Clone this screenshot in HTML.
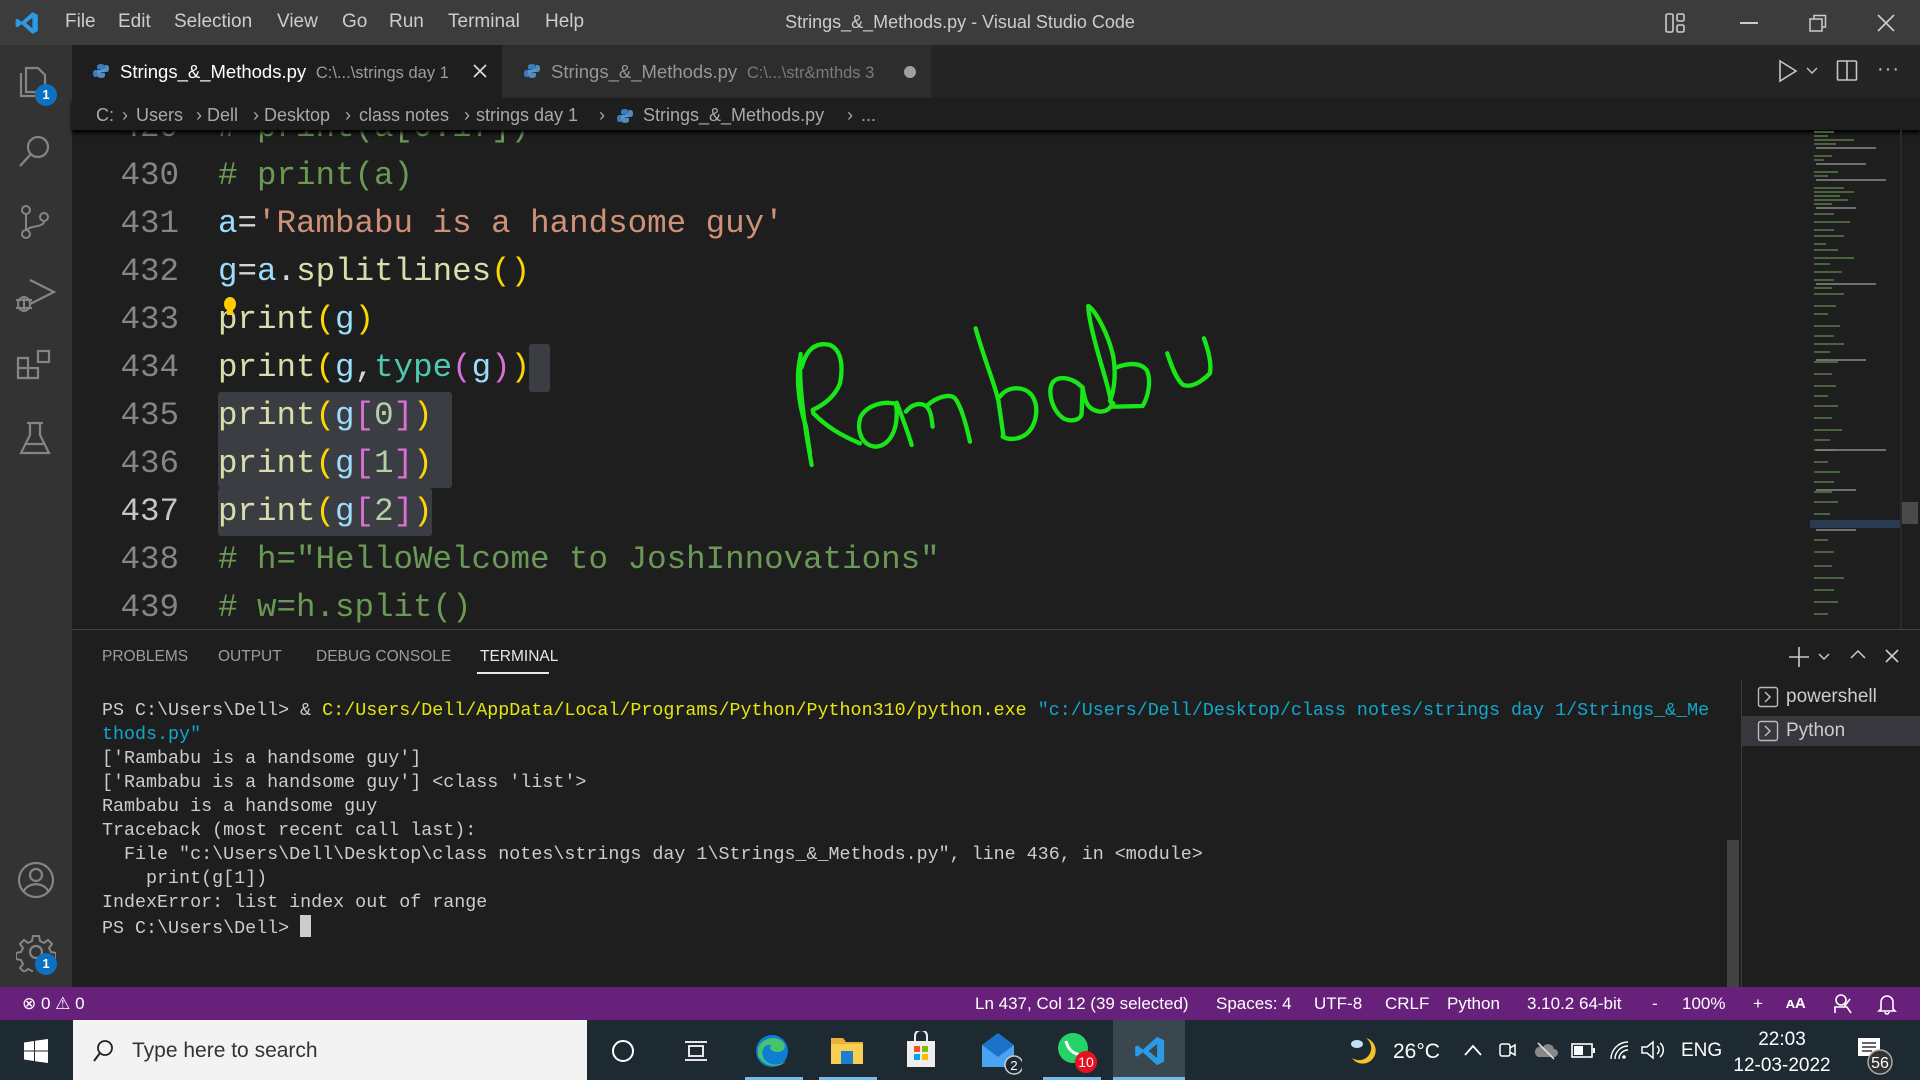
<!DOCTYPE html>
<html><head><meta charset="utf-8"><style>
*{margin:0;padding:0;box-sizing:border-box}
body{width:1920px;height:1080px;overflow:hidden;background:#1e1e1e;font-family:"Liberation Sans",sans-serif;position:relative;color:#ccc}
.a{position:absolute}
.mono{font-family:"Liberation Mono",monospace}
.ln{position:absolute;left:72px;width:107px;text-align:right;color:#858585}
.cd{position:absolute;left:218px;white-space:pre}
.cm{color:#6a9955}.st{color:#ce9178}.v{color:#9cdcfe}.f{color:#dcdcaa}.p1{color:#ffd700}.p2{color:#da70d6}.p3{color:#179fff}.ty{color:#4ec9b0}.n{color:#b5cea8}.o{color:#d4d4d4}
.t{position:absolute;left:102px;white-space:pre;font-size:18.35px;color:#ccc;height:24px;line-height:24px}
.sb{position:absolute;top:987px;height:33px;line-height:33px;font-size:17px;color:#fff;white-space:nowrap}
.mn{position:absolute;top:11px;font-size:19px;color:#ccc}
.bc{position:absolute;top:105px;font-size:18px;color:#a9a9a9;white-space:nowrap}
</style></head><body>
<!-- title bar -->
<div class="a" style="left:0;top:0;width:1920px;height:45px;background:#3c3c3c"></div>
<svg class="a" style="left:14px;top:10px" width="26" height="26" viewBox="0 0 24 24"><path d="M17 2 L22 4.5 V19.5 L17 22 L7 13 L3 16 L1.5 15 V9 L3 8 L7 11 L17 2 Z M17 7 L11 12 L17 17 Z" fill="#2b9be8"/></svg>
<div class="mn" style="left:65px">File</div>
<div class="mn" style="left:118px">Edit</div>
<div class="mn" style="left:174px">Selection</div>
<div class="mn" style="left:277px">View</div>
<div class="mn" style="left:342px">Go</div>
<div class="mn" style="left:389px">Run</div>
<div class="mn" style="left:448px">Terminal</div>
<div class="mn" style="left:545px">Help</div>
<div class="a" style="top:12px;left:0;width:1920px;text-align:center;font-size:18px;color:#ccc">Strings_&amp;_Methods.py - Visual Studio Code</div>
<svg class="a" style="left:1664px;top:12px" width="24" height="22"><rect x="2" y="2" width="7" height="18" rx="1.5" fill="none" stroke="#ccc" stroke-width="1.6"/><rect x="13" y="2" width="7" height="7" rx="1.5" fill="none" stroke="#ccc" stroke-width="1.6"/><rect x="13" y="13" width="7" height="7" rx="1.5" fill="none" stroke="#ccc" stroke-width="1.6"/></svg>
<div class="a" style="left:1740px;top:22px;width:18px;height:1.5px;background:#ccc"></div>
<svg class="a" style="left:1808px;top:13px" width="20" height="20"><rect x="2" y="6" width="12" height="12" fill="none" stroke="#ccc" stroke-width="1.5"/><path d="M6 6V2.5H17.5V14H14" fill="none" stroke="#ccc" stroke-width="1.5"/></svg>
<svg class="a" style="left:1876px;top:13px" width="20" height="20"><path d="M2 2L18 18M18 2L2 18" stroke="#ccc" stroke-width="1.6"/></svg>

<!-- activity bar -->
<div class="a" style="left:0;top:45px;width:72px;height:942px;background:#333"></div>
<svg class="a" style="left:14px;top:60px" width="40" height="40" viewBox="0 0 40 40"><path d="M12 8h12l7 7v17H12z M7 13v23h17" fill="none" stroke="#858585" stroke-width="2.2"/></svg>
<div class="a" style="left:35px;top:84px;width:22px;height:22px;border-radius:11px;background:#0e70c0;color:#fff;font-size:13px;font-weight:bold;text-align:center;line-height:22px">1</div>
<svg class="a" style="left:16px;top:132px" width="40" height="40"><circle cx="22" cy="15" r="10" fill="none" stroke="#858585" stroke-width="2.2"/><path d="M15 22L4 34" stroke="#858585" stroke-width="2.4"/></svg>
<svg class="a" style="left:16px;top:203px" width="40" height="40"><circle cx="10" cy="7" r="4" fill="none" stroke="#858585" stroke-width="2"/><circle cx="10" cy="31" r="4" fill="none" stroke="#858585" stroke-width="2"/><circle cx="28" cy="14" r="4" fill="none" stroke="#858585" stroke-width="2"/><path d="M10 11V27M28 18C28 25 14 22 11 27" fill="none" stroke="#858585" stroke-width="2"/></svg>
<svg class="a" style="left:14px;top:274px" width="42" height="42"><path d="M16 6L40 18L16 30" fill="none" stroke="#858585" stroke-width="2.2"/><ellipse cx="10" cy="30" rx="6" ry="7" fill="none" stroke="#858585" stroke-width="2"/><path d="M2 26h16M2 34h16M10 23v14" stroke="#858585" stroke-width="2"/></svg>
<svg class="a" style="left:16px;top:348px" width="42" height="40"><path d="M2 10h10v10h10v10H2z M2 20h10v10M12 20v10" fill="none" stroke="#858585" stroke-width="2.2"/><rect x="22" y="3" width="11" height="11" fill="none" stroke="#858585" stroke-width="2.2"/></svg>
<svg class="a" style="left:18px;top:420px" width="36" height="36"><path d="M9 3h16M12 3v12L3 33h28L22 15V3M7 24h20" fill="none" stroke="#858585" stroke-width="2.2"/></svg>
<svg class="a" style="left:16px;top:860px" width="40" height="40"><circle cx="20" cy="20" r="17" fill="none" stroke="#858585" stroke-width="2.2"/><circle cx="20" cy="15" r="6" fill="none" stroke="#858585" stroke-width="2.2"/><path d="M8 31c4-9 20-9 24 0" fill="none" stroke="#858585" stroke-width="2.2"/></svg>
<svg class="a" style="left:16px;top:932px" width="40" height="40"><circle cx="20" cy="20" r="6" fill="none" stroke="#858585" stroke-width="2.2"/><path d="M17 4h6l1 5 4 2 4-3 4 4-3 4 2 4 5 1v6l-5 1-2 4 3 4-4 4-4-3-4 2-1 5h-6l-1-5-4-2-4 3-4-4 3-4-2-4-5-1v-6l5-1 2-4-3-4 4-4 4 3 4-2z" fill="none" stroke="#858585" stroke-width="2"/></svg>
<div class="a" style="left:35px;top:953px;width:22px;height:22px;border-radius:11px;background:#0e70c0;color:#fff;font-size:13px;font-weight:bold;text-align:center;line-height:22px">1</div>

<!-- tabs -->
<div class="a" style="left:72px;top:45px;width:1848px;height:53px;background:#252526"></div>
<div class="a" style="left:72px;top:45px;width:430px;height:53px;background:#1e1e1e"></div>
<div class="a" style="left:502px;top:45px;width:429px;height:53px;background:#2d2d2d"></div>
<svg class="a" style="left:93px;top:63px" width="16" height="16"><path d="M8 1C4 1 4 3 4 4v2h4v1H2.5C1 7 0 8 0 10.5S1 14 2.5 14H4v-2c0-1.5 1-2.5 2.5-2.5h3.5c1 0 2-1 2-2V4c0-1.5-1.5-3-4-3z" fill="#3b7bbf"/><path d="M8 15c4 0 4-2 4-3v-2H8V9h5.5C15 9 16 8 16 5.5S15 2 13.5 2H12v2c0 1.5-1 2.5-2.5 2.5H6c-1 0-2 1-2 2V12c0 1.5 1.5 3 4 3z" fill="#5a9fd4" opacity=".85"/></svg>
<div class="a" style="left:120px;top:61px;font-size:18.5px;color:#fff;white-space:nowrap">Strings_&amp;_Methods.py <span style="font-size:16.5px;color:#9d9d9d">&nbsp;C:\...\strings day 1</span></div>
<svg class="a" style="left:472px;top:63px" width="16" height="16"><path d="M2 2L14 14M14 2L2 14" stroke="#ddd" stroke-width="1.6"/></svg>
<svg class="a" style="left:524px;top:63px" width="16" height="16"><path d="M8 1C4 1 4 3 4 4v2h4v1H2.5C1 7 0 8 0 10.5S1 14 2.5 14H4v-2c0-1.5 1-2.5 2.5-2.5h3.5c1 0 2-1 2-2V4c0-1.5-1.5-3-4-3z" fill="#3b7bbf"/><path d="M8 15c4 0 4-2 4-3v-2H8V9h5.5C15 9 16 8 16 5.5S15 2 13.5 2H12v2c0 1.5-1 2.5-2.5 2.5H6c-1 0-2 1-2 2V12c0 1.5 1.5 3 4 3z" fill="#5a9fd4" opacity=".85"/></svg>
<div class="a" style="left:551px;top:61px;font-size:18.5px;color:#969696;white-space:nowrap">Strings_&amp;_Methods.py <span style="font-size:16.5px;color:#7a7a7a">&nbsp;C:\...\str&amp;mthds 3</span></div>
<div class="a" style="left:904px;top:66px;width:12px;height:12px;border-radius:6px;background:#a0a0a0"></div>
<svg class="a" style="left:1776px;top:59px" width="24" height="24"><path d="M4 2L20 12L4 22Z" fill="none" stroke="#c5c5c5" stroke-width="1.6"/></svg>
<svg class="a" style="left:1806px;top:66px" width="12" height="10"><path d="M1 2L6 7L11 2" fill="none" stroke="#c5c5c5" stroke-width="1.4"/></svg>
<svg class="a" style="left:1836px;top:59px" width="22" height="24"><rect x="1.5" y="2" width="19" height="19" rx="1" fill="none" stroke="#c5c5c5" stroke-width="1.6"/><path d="M11 2V21" stroke="#c5c5c5" stroke-width="1.6"/></svg>
<div class="a" style="left:1877px;top:58px;font-size:20px;color:#c5c5c5;letter-spacing:1px">···</div>

<!-- editor -->
<div class="a mono" style="left:0;top:101px;width:1800px;height:528px;overflow:hidden;font-size:32.5px;line-height:48px">
 <div class="a" style="left:218px;top:291px;width:234px;height:96px;background:#3a3d41;border-radius:3px"></div>
 <div class="a" style="left:218px;top:387px;width:214px;height:48px;background:#3a3d41;border-radius:3px"></div>
 <div class="a" style="left:529px;top:243px;width:21px;height:48px;background:#3a3d41;border-radius:3px"></div>
 <div class="ln" style="top:3px">429</div><div class="cd cm" style="top:3px"># print(a[0:17])</div>
 <div class="ln" style="top:51px">430</div><div class="cd cm" style="top:51px"># print(a)</div>
 <div class="ln" style="top:99px">431</div><div class="cd" style="top:99px"><span class="v">a</span><span class="o">=</span><span class="st">'Rambabu is a handsome guy'</span></div>
 <div class="ln" style="top:147px">432</div><div class="cd" style="top:147px"><span class="v">g</span><span class="o">=</span><span class="v">a</span><span class="o">.</span><span class="f">splitlines</span><span class="p1">()</span></div>
 <div class="ln" style="top:195px">433</div><div class="cd" style="top:195px"><span class="f">print</span><span class="p1">(</span><span class="v">g</span><span class="p1">)</span></div>
 <div class="ln" style="top:243px">434</div><div class="cd" style="top:243px"><span class="f">print</span><span class="p1">(</span><span class="v">g</span><span class="o">,</span><span class="ty">type</span><span class="p2">(</span><span class="v">g</span><span class="p2">)</span><span class="p1">)</span></div>
 <div class="ln" style="top:291px">435</div><div class="cd" style="top:291px"><span class="f">print</span><span class="p1">(</span><span class="v">g</span><span class="p2">[</span><span class="n">0</span><span class="p2">]</span><span class="p1">)</span></div>
 <div class="ln" style="top:339px">436</div><div class="cd" style="top:339px"><span class="f">print</span><span class="p1">(</span><span class="v">g</span><span class="p2">[</span><span class="n">1</span><span class="p2">]</span><span class="p1">)</span></div>
 <div class="ln" style="top:387px;color:#c6c6c6">437</div><div class="cd" style="top:387px"><span class="f">print</span><span class="p1">(</span><span class="v">g</span><span class="p2">[</span><span class="n">2</span><span class="p2">]</span><span class="p1">)</span></div>
 <div class="ln" style="top:435px">438</div><div class="cd cm" style="top:435px"># h="HelloWelcome to JoshInnovations"</div>
 <div class="ln" style="top:483px">439</div><div class="cd cm" style="top:483px"># w=h.split()</div>
</div>
<svg class="a" style="left:222px;top:296px" width="16" height="22"><ellipse cx="8" cy="8" rx="6" ry="7" fill="#ffcc00"/><rect x="5" y="14" width="6" height="5" fill="#ffcc00"/></svg>
<!-- breadcrumbs -->
<div class="a" style="left:72px;top:98px;width:1848px;height:32px;background:#1e1e1e;box-shadow:0 3px 4px #000"></div>
<div class="bc" style="left:96px">C:</div>
<div class="bc" style="left:122px">›</div>
<div class="bc" style="left:136px">Users</div>
<div class="bc" style="left:196px">›</div>
<div class="bc" style="left:207px">Dell</div>
<div class="bc" style="left:253px">›</div>
<div class="bc" style="left:264px">Desktop</div>
<div class="bc" style="left:345px">›</div>
<div class="bc" style="left:359px">class notes</div>
<div class="bc" style="left:464px">›</div>
<div class="bc" style="left:476px">strings day 1</div>
<div class="bc" style="left:599px">›</div>
<svg class="a" style="left:617px;top:108px" width="16" height="16"><path d="M8 1C4 1 4 3 4 4v2h4v1H2.5C1 7 0 8 0 10.5S1 14 2.5 14H4v-2c0-1.5 1-2.5 2.5-2.5h3.5c1 0 2-1 2-2V4c0-1.5-1.5-3-4-3z" fill="#3b7bbf"/><path d="M8 15c4 0 4-2 4-3v-2H8V9h5.5C15 9 16 8 16 5.5S15 2 13.5 2H12v2c0 1.5-1 2.5-2.5 2.5H6c-1 0-2 1-2 2V12c0 1.5 1.5 3 4 3z" fill="#5a9fd4" opacity=".85"/></svg>
<div class="bc" style="left:643px">Strings_&amp;_Methods.py</div>
<div class="bc" style="left:847px">›</div>
<div class="bc" style="left:861px">...</div>
<!-- minimap -->
<svg class="a" style="left:1810px;top:130px" width="110" height="499">
<g stroke="#5a7a4a" stroke-width="1.4">
<path d="M4 2h20M4 6h14M4 10h40M4 14h22M4 26h18M4 30h10M4 42h24M4 46h14M4 58h30M4 62h40M4 66h26M4 70h34M4 74h18M4 84h20M4 92h36M4 100h20M4 106h30M4 114h12M4 120h24M4 128h40M4 134h16M4 142h28M4 150h20M4 158h18M4 164h30M4 176h22M4 184h14M4 196h26M4 206h20M4 214h30M4 222h16M4 232h24M4 244h18M4 256h22M4 266h14M4 276h24M4 288h18M4 300h28M4 310h16M4 320h22M4 332h14M4 342h26M4 352h20M4 362h18M4 372h24M4 384h16M4 396h28M4 410h14M4 422h20M4 436h18M4 448h30M4 460h20M4 472h24M4 484h14"/>
<path d="M6 18h60M6 34h50M6 50h70M6 78h40M6 154h60M6 230h50M6 320h70M6 360h40M6 400h40" stroke="#8a8a8a"/>
</g>
<rect x="0" y="390" width="90" height="8" fill="#2a3a50"/>
<rect x="90" y="0" width="2" height="499" fill="#2a2a2a"/>
<rect x="92" y="372" width="16" height="22" fill="#4a4a4a"/>
</svg>

<!-- handwriting -->
<svg class="a" style="left:0;top:0" width="1920" height="1080" viewBox="0 0 1920 1080">
<g transform="translate(780,280) scale(0.3333)" fill="none" stroke="#19e619" stroke-width="13" stroke-linecap="round" stroke-linejoin="round">
<path d="M62 222C55 300 70 420 95 555M62 228C48 280 52 360 78 440L90 520"/>
<path d="M65 262C80 205 110 185 150 195C185 210 190 260 180 310C165 350 130 375 98 390L100 400C140 440 180 465 240 490"/>
<path d="M350 372C310 362 262 375 242 410C228 450 245 500 290 500C330 495 350 450 350 405C352 385 345 370 350 368C370 420 385 460 395 495"/>
<path d="M378 395C392 375 420 364 440 380C455 396 455 420 458 440M440 378C470 350 510 340 525 355C545 380 560 440 570 485"/>
<path d="M587 145C610 230 640 300 655 360L670 465M660 350C680 320 730 315 755 345C780 380 770 440 735 465C710 480 685 480 668 470"/>
<path d="M905 320C880 295 840 285 820 305C800 330 815 390 850 415C880 430 905 415 905 400L908 322C915 370 925 390 960 395C980 395 990 385 1000 370"/>
<path d="M925 78C925 110 940 170 960 240C975 290 990 340 995 375M925 78C945 90 985 160 1000 230C1010 290 1000 340 990 362"/>
<path d="M1010 262C1040 250 1080 245 1100 270C1115 300 1105 350 1088 378L1000 380"/>
<path d="M1162 220C1175 260 1190 300 1210 315C1240 325 1270 300 1290 280C1295 250 1285 210 1272 175"/>
</g></svg>

<!-- panel -->
<div class="a" style="left:72px;top:629px;width:1848px;height:358px;background:#1e1e1e;border-top:1px solid #414141"></div>
<div class="a" style="top:648px;left:102px;font-size:15.5px;color:#9d9d9d;white-space:nowrap">PROBLEMS</div>
<div class="a" style="top:648px;left:218px;font-size:15.5px;color:#9d9d9d">OUTPUT</div>
<div class="a" style="top:648px;left:316px;font-size:15.5px;color:#9d9d9d">DEBUG CONSOLE</div>
<div class="a" style="top:648px;left:480px;font-size:15.5px;color:#e7e7e7">TERMINAL</div>
<div class="a" style="top:672px;left:477px;width:72px;height:1.5px;background:#e7e7e7"></div>
<svg class="a" style="left:1788px;top:646px" width="22" height="22"><path d="M11 1V21M1 11H21" stroke="#ccc" stroke-width="1.6"/></svg>
<svg class="a" style="left:1818px;top:652px" width="12" height="10"><path d="M1 2L6 7L11 2" fill="none" stroke="#ccc" stroke-width="1.4"/></svg>
<svg class="a" style="left:1850px;top:648px" width="16" height="12"><path d="M1 10L8 3L15 10" fill="none" stroke="#ccc" stroke-width="1.5"/></svg>
<svg class="a" style="left:1884px;top:648px" width="16" height="16"><path d="M2 2L14 14M14 2L2 14" stroke="#ccc" stroke-width="1.6"/></svg>

<div class="mono">
<div class="t" style="top:699px">PS C:\Users\Dell&gt; &amp; <span style="color:#e5e510">C:/Users/Dell/AppData/Local/Programs/Python/Python310/python.exe</span> <span style="color:#11a8cd">"c:/Users/Dell/Desktop/class notes/strings day 1/Strings_&amp;_Me</span></div>
<div class="t" style="top:723px;color:#11a8cd">thods.py"</div>
<div class="t" style="top:747px">['Rambabu is a handsome guy']</div>
<div class="t" style="top:771px">['Rambabu is a handsome guy'] &lt;class 'list'&gt;</div>
<div class="t" style="top:795px">Rambabu is a handsome guy</div>
<div class="t" style="top:819px">Traceback (most recent call last):</div>
<div class="t" style="top:843px">  File "c:\Users\Dell\Desktop\class notes\strings day 1\Strings_&amp;_Methods.py", line 436, in &lt;module&gt;</div>
<div class="t" style="top:867px">    print(g[1])</div>
<div class="t" style="top:891px">IndexError: list index out of range</div>
<div class="t" style="top:915px">PS C:\Users\Dell&gt; <span style="display:inline-block;width:11px;height:22px;background:#ccc;vertical-align:-4px"></span></div>
</div>
<div class="a" style="left:1727px;top:840px;width:12px;height:147px;background:#424242"></div>
<div class="a" style="left:1741px;top:680px;width:1px;height:307px;background:#3c3c3c"></div>
<div class="a" style="left:1742px;top:716px;width:178px;height:30px;background:#37373d"></div>
<svg class="a" style="left:1757px;top:686px" width="22" height="22"><rect x="1.5" y="1.5" width="19" height="19" rx="2" fill="none" stroke="#bbb" stroke-width="1.4"/><path d="M8 6L13 11L8 16" fill="none" stroke="#bbb" stroke-width="1.5"/></svg>
<div class="a" style="left:1786px;top:686px;font-size:19px;color:#ccc">powershell</div>
<svg class="a" style="left:1757px;top:720px" width="22" height="22"><rect x="1.5" y="1.5" width="19" height="19" rx="2" fill="none" stroke="#bbb" stroke-width="1.4"/><path d="M8 6L13 11L8 16" fill="none" stroke="#bbb" stroke-width="1.5"/></svg>
<div class="a" style="left:1786px;top:720px;font-size:19px;color:#ccc">Python</div>

<!-- status bar -->
<div class="a" style="left:0;top:987px;width:1920px;height:33px;background:#68217a"></div>
<div class="sb" style="left:22px">⊗ 0 ⚠ 0</div>
<div class="sb" style="left:975px">Ln 437, Col 12 (39 selected)</div>
<div class="sb" style="left:1216px">Spaces: 4</div>
<div class="sb" style="left:1314px">UTF-8</div>
<div class="sb" style="left:1385px">CRLF</div>
<div class="sb" style="left:1447px">Python</div>
<div class="sb" style="left:1527px">3.10.2 64-bit</div>
<div class="sb" style="left:1652px">-</div>
<div class="sb" style="left:1682px">100%</div>
<div class="sb" style="left:1753px">+</div>
<div class="sb" style="left:1786px;font-weight:bold;font-size:15px">ᴀA</div>
<svg class="a" style="left:1832px;top:993px" width="22" height="22"><circle cx="9" cy="7" r="5" fill="none" stroke="#fff" stroke-width="1.6"/><path d="M3 20V14h12l4 6M12 14l6-8" fill="none" stroke="#fff" stroke-width="1.6"/></svg>
<svg class="a" style="left:1877px;top:993px" width="20" height="22"><path d="M4 16V9a6 6 0 0 1 12 0v7l2 2H2zM8 19a2 2 0 0 0 4 0" fill="none" stroke="#fff" stroke-width="1.6"/></svg>

<!-- taskbar -->
<div class="a" style="left:0;top:1020px;width:1920px;height:60px;background:#1d2a32"></div>
<svg class="a" style="left:24px;top:1039px" width="24" height="24"><path d="M0 3.5L10 2V11.5H0zM11 1.8L24 0V11.5H11zM0 12.5H10V22L0 20.5zM11 12.5H24V24L11 22.2z" fill="#fff"/></svg>
<div class="a" style="left:73px;top:1020px;width:514px;height:60px;background:#f3f3f3"></div>
<svg class="a" style="left:92px;top:1039px" width="22" height="24"><circle cx="13" cy="9" r="7" fill="none" stroke="#222" stroke-width="1.8"/><path d="M8 14L2 22" stroke="#222" stroke-width="2"/></svg>
<div class="a" style="left:132px;top:1039px;font-size:21px;color:#333">Type here to search</div>
<div class="a" style="left:612px;top:1040px;width:22px;height:22px;border:2.5px solid #fff;border-radius:50%"></div>
<svg class="a" style="left:683px;top:1038px" width="26" height="26"><path d="M2 4h22M2 22h22M6 8h14v10H6z" fill="none" stroke="#fff" stroke-width="1.8"/></svg>
<svg class="a" style="left:754px;top:1033px" width="36" height="36"><circle cx="18" cy="18" r="16" fill="#0f7cd6"/><path d="M4 16C6 6 20 2 28 8C34 13 30 20 22 19C16 18 14 14 18 12C10 10 6 18 10 26C14 32 24 34 32 28C26 36 8 34 4 22z" fill="#46c46b"/></svg>
<svg class="a" style="left:830px;top:1035px" width="34" height="30"><path d="M1 3h12l3 4h17v22H1z" fill="#e8b23a"/><path d="M1 9h32v20H1z" fill="#f7cf52"/><rect x="11" y="16" width="12" height="13" fill="#1e7fd1"/></svg>
<svg class="a" style="left:904px;top:1031px" width="34" height="38"><path d="M3 10h28v26H3z" fill="#eee"/><path d="M11 10V5a6 6 0 0 1 12 0v5" fill="none" stroke="#eee" stroke-width="2"/><rect x="10" y="15" width="6" height="6" fill="#f35325"/><rect x="18" y="15" width="6" height="6" fill="#81bc06"/><rect x="10" y="23" width="6" height="6" fill="#05a6f0"/><rect x="18" y="23" width="6" height="6" fill="#ffba08"/></svg>
<svg class="a" style="left:980px;top:1031px" width="42" height="44"><path d="M2 14L18 2L34 14V36H2z" fill="#1a73c9"/><path d="M2 14L18 26L34 14V36H2z" fill="#4aa3f0"/><circle cx="34" cy="34" r="9" fill="#1d2a32" stroke="#ccc" stroke-width="1.5"/><text x="34" y="39" font-size="13" fill="#fff" text-anchor="middle" font-family="Liberation Sans">2</text></svg>
<svg class="a" style="left:1056px;top:1031px" width="44" height="44"><circle cx="17" cy="17" r="15" fill="#25d366"/><path d="M10 10c2 8 6 12 14 14" stroke="#fff" stroke-width="3" fill="none"/><circle cx="30" cy="31" r="11" fill="#e81123"/><text x="30" y="36" font-size="14" fill="#fff" text-anchor="middle" font-family="Liberation Sans">10</text></svg>
<div class="a" style="left:1113px;top:1020px;width:72px;height:60px;background:#3b474e"></div>
<svg class="a" style="left:1133px;top:1034px" width="34" height="34" viewBox="0 0 24 24"><path d="M17 2 L22 4.5 V19.5 L17 22 L7 13 L3 16 L1.5 15 V9 L3 8 L7 11 L17 2 Z M17 7 L11 12 L17 17 Z" fill="#2b9be8"/></svg>
<div class="a" style="left:745px;top:1077px;width:58px;height:3px;background:#76b9ed"></div>
<div class="a" style="left:819px;top:1077px;width:58px;height:3px;background:#76b9ed"></div>
<div class="a" style="left:1043px;top:1077px;width:58px;height:3px;background:#76b9ed"></div>
<div class="a" style="left:1113px;top:1077px;width:72px;height:3px;background:#76b9ed"></div>
<svg class="a" style="left:1348px;top:1036px" width="30" height="30"><path d="M18 2A13 13 0 1 1 4 22A11 11 0 0 0 18 2z" fill="#f6c22b"/><ellipse cx="9" cy="8" rx="6" ry="4" fill="#bfe0f5"/></svg>
<div class="a" style="left:1393px;top:1040px;font-size:21px;color:#fff">26°C</div>
<svg class="a" style="left:1463px;top:1043px" width="20" height="14"><path d="M2 12L10 3L18 12" fill="none" stroke="#fff" stroke-width="1.8"/></svg>
<svg class="a" style="left:1497px;top:1039px" width="20" height="24"><rect x="3" y="5" width="10" height="12" rx="2" fill="none" stroke="#fff" stroke-width="1.5"/><path d="M13 9l5-3v10l-5-3" fill="none" stroke="#fff" stroke-width="1.5"/></svg>
<svg class="a" style="left:1534px;top:1041px" width="24" height="20"><path d="M4 16h16a4 4 0 0 0 0-8 6 6 0 0 0-11-2 5 5 0 0 0-5 10z" fill="#888"/><path d="M4 2L20 18" stroke="#ddd" stroke-width="1.6"/></svg>
<svg class="a" style="left:1571px;top:1043px" width="26" height="16"><rect x="1" y="1" width="20" height="13" fill="none" stroke="#fff" stroke-width="1.6"/><rect x="3" y="3" width="9" height="9" fill="#fff"/><rect x="22" y="5" width="2" height="5" fill="#fff"/></svg>
<svg class="a" style="left:1608px;top:1039px" width="24" height="22"><path d="M3 20A17 17 0 0 1 20 3M7 20A13 13 0 0 1 20 7M11 20A9 9 0 0 1 20 11" fill="none" stroke="#fff" stroke-width="1.4"/><circle cx="16" cy="18" r="1.8" fill="#fff"/></svg>
<svg class="a" style="left:1640px;top:1039px" width="26" height="22"><path d="M2 8h5l6-5v16l-6-5H2z" fill="none" stroke="#fff" stroke-width="1.5"/><path d="M17 7a5 5 0 0 1 0 8M20 4a9 9 0 0 1 0 14" fill="none" stroke="#fff" stroke-width="1.5"/></svg>
<div class="a" style="left:1681px;top:1040px;font-size:19px;color:#fff">ENG</div>
<div class="a" style="left:1736px;top:1029px;width:92px;text-align:center;font-size:19px;color:#fff">22:03</div>
<div class="a" style="left:1730px;top:1055px;width:104px;text-align:center;font-size:19px;color:#fff">12-03-2022</div>
<svg class="a" style="left:1856px;top:1036px" width="40" height="40"><rect x="2" y="2" width="22" height="18" fill="#fff"/><path d="M6 7h14M6 11h14M6 15h10" stroke="#333" stroke-width="1.5"/><circle cx="24" cy="26" r="12" fill="#333" stroke="#aaa" stroke-width="1.5"/><text x="24" y="32" font-size="16" fill="#fff" text-anchor="middle" font-family="Liberation Sans">56</text></svg>
</body></html>
